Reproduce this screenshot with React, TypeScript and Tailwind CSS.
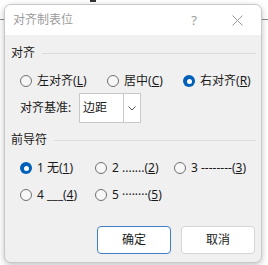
import React from "react";

const font = { fontFamily: '"Noto Sans", "Noto Sans CJK SC", sans-serif' };

function Radio({ checked, label, u, className = "" }: { checked?: boolean; label: React.ReactNode; u: string; className?: string }) {
  return (
    <div className={"flex h-[16px] items-center whitespace-nowrap " + className}>
      {checked ? (
        <span className="flex h-[12px] w-[12px] shrink-0 items-center justify-center rounded-full bg-[#005fb8]">
          <span className="h-[5px] w-[5px] rounded-full bg-white" />
        </span>
      ) : (
        <span className="h-[12px] w-[12px] shrink-0 rounded-full border border-[#707070] bg-[#f7f7f7]" />
      )}
      <span className="ml-[5px] text-[12px] leading-[16px] text-[#1a1a1a]">
        {label}(<span className="underline">{u}</span>)
      </span>
    </div>
  );
}

function Header({ title }: { title: string }) {
  return (
    <div className="flex h-[16px] items-center">
      <span className="text-[12px] leading-[16px] text-[#1a1a1a]">{title}</span>
      <span className="ml-[7px] h-px flex-1 bg-[#dcdcdc]" />
    </div>
  );
}

export default function App() {
  return (
    <div className="relative h-[265px] w-[268px] overflow-hidden bg-white leading-[16px]" style={font}>
      <div className="absolute left-0 top-[19px] h-px w-full bg-[#8a8a8a]" />
      <div className="absolute left-[90px] top-0 h-[2px] w-[6px] bg-[#333]" />
      <div className="relative ml-[4px] mt-[4px] flex h-[259px] w-[258px] flex-col overflow-hidden rounded-[7px] border border-[#c8c8c8] bg-[#f0f0f0] shadow-[0_2px_6px_rgba(0,0,0,0.25)]">
        <div className="flex h-[30px] shrink-0 items-center bg-white pl-[8px]">
          <span className="text-[12px] text-[#9b9b9b]">对齐制表位</span>
          <span className="ml-auto mr-[35px] text-[13px] text-[#9b9b9b]">?</span>
          <svg width="11" height="11" viewBox="0 0 11 11" className="mr-[18px]">
            <path d="M0.5 0.5L10.5 10.5M10.5 0.5L0.5 10.5" stroke="#9b9b9b" strokeWidth="1" />
          </svg>
        </div>
        <div className="flex flex-1 flex-col pl-[6px] pr-[5px] pt-[10px]">
          <Header title="对齐" />
          <div className="mt-[12px] flex items-center pl-[9px]">
            <Radio label="左对齐" u="L" className="w-[87px]" />
            <Radio label="居中" u="C" className="w-[76px]" />
            <Radio checked label="右对齐" u="R" />
          </div>
          <div className="mt-[4px] flex items-center pl-[9px]">
            <span className="w-[59px] whitespace-nowrap text-[12px] text-[#1a1a1a]">对齐基准:</span>
            <div className="flex h-[30px] w-[62px] border border-[#c9c9c9] bg-white">
              <span className="flex flex-1 items-center pl-[3px] text-[12px] text-[#1a1a1a]">边距</span>
              <span className="flex w-[17px] items-center justify-center border-l border-[#c9c9c9]">
                <svg width="8" height="5" viewBox="0 0 8 5">
                  <path d="M0.5 0.5L4 4L7.5 0.5" fill="none" stroke="#555" strokeWidth="1" />
                </svg>
              </span>
            </div>
          </div>
          <div className="mt-[9px]">
            <Header title="前导符" />
          </div>
          <div className="mt-[12px] flex items-center pl-[9px]">
            <Radio checked label="1 无" u="1" className="w-[75px]" />
            <Radio label="2 ......." u="2" className="w-[79px]" />
            <Radio label="3 --------" u="3" />
          </div>
          <div className="mt-[11px] flex items-center pl-[9px]">
            <Radio label="4 ___" u="4" className="w-[75px]" />
            <Radio label="5 ········" u="5" />
          </div>
          <div className="mt-auto mb-[8px] flex justify-end gap-[10px] pr-[1px]">
            <button className="h-[28px] w-[74px] rounded-[4px] border border-[#3f7fc4] bg-white text-[12px] text-[#1a1a1a]">确定</button>
            <button className="h-[28px] w-[74px] rounded-[4px] border border-[#d5d5d5] bg-white text-[12px] text-[#1a1a1a]">取消</button>
          </div>
        </div>
      </div>
    </div>
  );
}
